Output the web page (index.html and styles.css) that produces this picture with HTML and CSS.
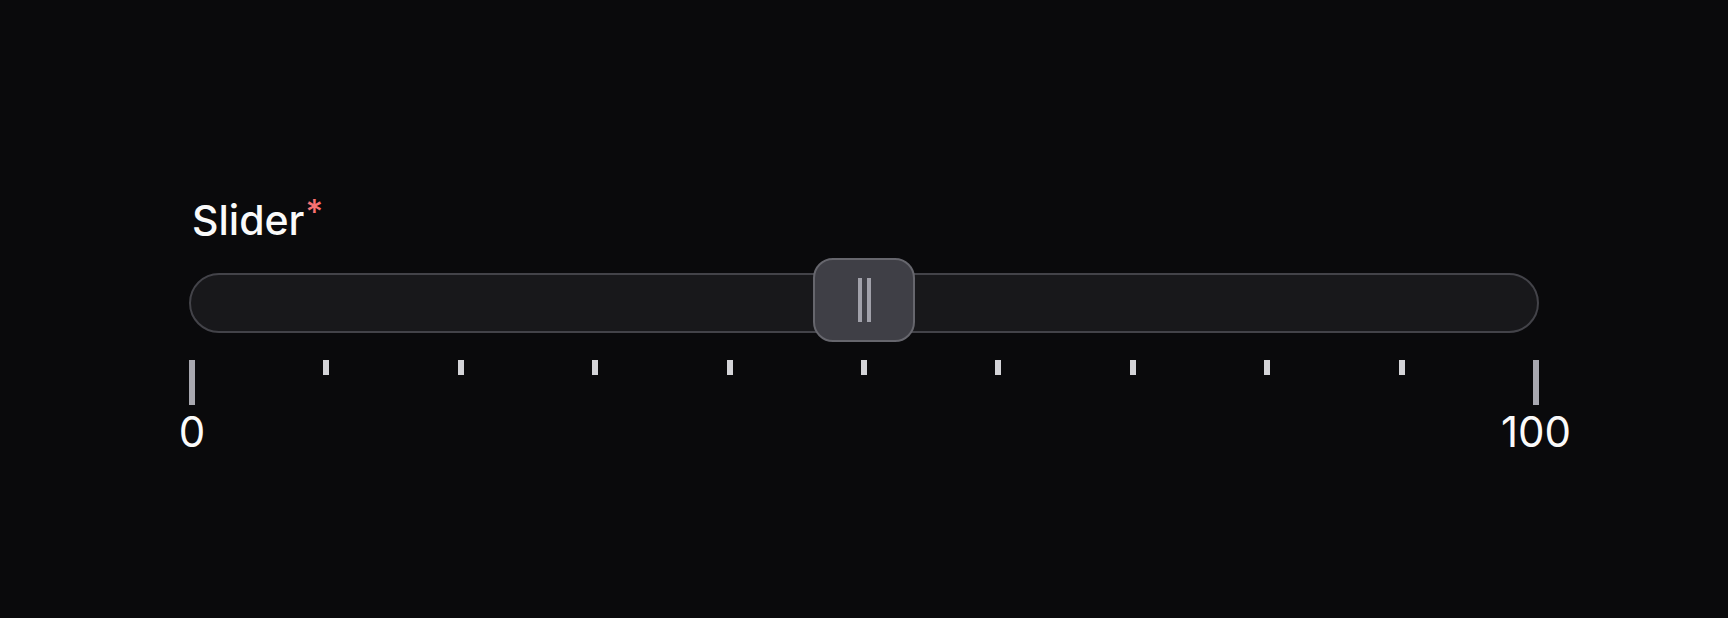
FILE: index.html
```html
<!DOCTYPE html>
<html lang="en">
<head>
    <meta charset="UTF-8">
    <meta name="viewport" content="width=device-width, initial-scale=1.0">
    <title>Slider</title>
    <link rel="stylesheet" href="styles.css">
</head>
<body>
    <div class="field">
        <label class="field-label">Slider<span class="required">*</span></label>

        <div class="track">
            <div class="thumb">
                <span class="grip"></span>
                <span class="grip"></span>
            </div>
        </div>

        <div class="ticks">
            <div class="tick tick-major"><span class="mark"></span><span class="tick-label">0</span></div>
            <div class="tick"><span class="mark"></span></div>
            <div class="tick"><span class="mark"></span></div>
            <div class="tick"><span class="mark"></span></div>
            <div class="tick"><span class="mark"></span></div>
            <div class="tick"><span class="mark"></span></div>
            <div class="tick"><span class="mark"></span></div>
            <div class="tick"><span class="mark"></span></div>
            <div class="tick"><span class="mark"></span></div>
            <div class="tick"><span class="mark"></span></div>
            <div class="tick tick-major"><span class="mark"></span><span class="tick-label">100</span></div>
        </div>
    </div>
</body>
</html>
```

FILE: styles.css
```css
body {
    margin: 0;
    padding: 0;
    background-color: #0a0a0c;
    color: #fafafa;
    font-family: Inter, "Noto Sans", sans-serif;
}
.field {
    width: 1350px;
    padding: 196px 0 0 189px;
}
.field-label {
    display: block;
    margin-left: 3px;
    font-size: 41px;
    font-weight: 500;
    line-height: 48px;
}
.required {
    color: #f87171;
    font-size: 34px;
    line-height: 0;
    margin-left: 1px;
    vertical-align: 11px;
}
.track {
    position: relative;
    box-sizing: border-box;
    height: 60px;
    margin-top: 29px;
    background-color: #18181b;
    border: 2px solid #434349;
    border-radius: 30px;
}
.thumb {
    position: absolute;
    top: -17px;
    left: calc(50% - 51px);
    box-sizing: border-box;
    width: 102px;
    height: 84px;
    display: flex;
    justify-content: center;
    align-items: center;
    gap: 5px;
    background-color: #3f3f46;
    border: 2px solid #66666d;
    border-radius: 20px;
}
.grip {
    width: 4px;
    height: 44px;
    background-color: #a1a1aa;
}
.ticks {
    display: flex;
    justify-content: space-between;
    margin-top: 27px;
}
.tick {
    width: 6px;
    display: flex;
    flex-direction: column;
    align-items: center;
}
.mark {
    width: 6px;
    height: 15px;
    background-color: #d4d4d8;
}
.tick-major .mark {
    height: 45px;
    background-color: #a8a8b0;
}
.tick-label {
    margin-top: 3px;
    font-size: 42px;
    line-height: 48px;
    white-space: nowrap;
}
```
